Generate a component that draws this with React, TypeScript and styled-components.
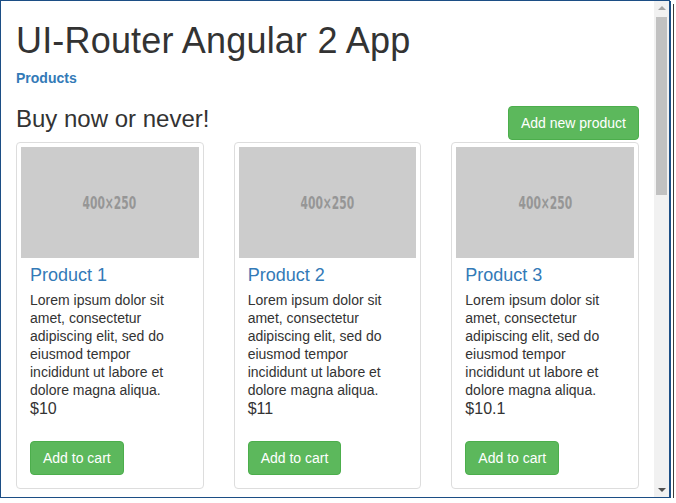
import React from "react";
import styled, { createGlobalStyle } from "styled-components";

const Global = createGlobalStyle`
  html, body { margin: 0; padding: 0; background: #ffffff; }
  body {
    font-family: "Liberation Sans", Arial, Helvetica, sans-serif;
    font-size: 14px;
    line-height: 20px;
    color: #333333;
  }
  * { box-sizing: border-box; }
`;

const Frame = styled.div`
  width: 670px;
  height: 498px;
  border: 1px solid #1c4e85;
  box-shadow: 1px 1px 0 0 #1c4e85, 3px 3px 0 0 #ffffff, 4px 4px 0 0 #3c3c3c;
  display: flex;
  overflow: hidden;
  background: #ffffff;
`;

const Viewport = styled.div`
  flex: 1;
  overflow: hidden;
`;

const Container = styled.div`
  padding: 0 15px;
`;

const Title = styled.h1`
  margin: 20px 0 0;
  font-size: 36px;
  line-height: 39.6px;
  font-weight: 400;
  letter-spacing: 0.18px;
  color: #333333;
`;

const NavLink = styled.a`
  display: block;
  margin-top: 7px;
  font-size: 14px;
  line-height: 20px;
  font-weight: 700;
  color: #337ab7;
  text-decoration: none;
`;

const HeaderRow = styled.div`
  display: flex;
  justify-content: space-between;
  align-items: flex-start;
  margin-top: 18px;
`;

const Subtitle = styled.h3`
  margin: 0 0 10px;
  font-size: 24px;
  line-height: 26.4px;
  font-weight: 400;
  color: #333333;
`;

const Button = styled.button`
  display: inline-block;
  padding: 6px 12px;
  font-family: "Liberation Sans", Arial, sans-serif;
  font-size: 14px;
  line-height: 20px;
  color: #ffffff;
  background: #5cb85c;
  border: 1px solid #4cae4c;
  border-radius: 4px;
  cursor: pointer;
`;

const HeaderButton = styled(Button)`
  margin-top: 0.5px;
`;

const Grid = styled.div`
  display: grid;
  grid-template-columns: repeat(3, 1fr);
  column-gap: 30px;
`;

const Thumbnail = styled.div`
  border: 1px solid #dddddd;
  border-radius: 4px;
  padding: 4px;
  background: #ffffff;
`;

const Placeholder = styled.div`
  aspect-ratio: 400 / 250;
  background: #cccccc;
  display: flex;
  align-items: center;
  justify-content: center;
`;

const PlaceholderText = styled.span`
  display: inline-block;
  font-family: "DejaVu Sans Condensed", "DejaVu Sans", sans-serif;
  font-size: 17px;
  font-weight: 700;
  color: #969696;
  transform: scaleX(0.7);
`;

const Caption = styled.div`
  padding: 8px 9px 9px;
`;

const ProductName = styled.a`
  display: block;
  margin: 0 0 5px;
  font-size: 18px;
  line-height: 19.8px;
  color: #337ab7;
  text-decoration: none;
`;

const Description = styled.p`
  margin: 0;
  font-size: 14px;
  line-height: 18px;
  color: #333333;
`;

const Price = styled.div`
  font-size: 16px;
  line-height: 20px;
  color: #333333;
  margin-bottom: 22px;
`;

const Scrollbar = styled.div`
  width: 15px;
  background: #f1f1f1;
  display: flex;
  flex-direction: column;
  align-items: center;
`;

const Arrow = styled.div<{ $dir: "up" | "down"; $color: string }>`
  width: 0;
  height: 0;
  border-left: 4px solid transparent;
  border-right: 4px solid transparent;
  ${(p) =>
    p.$dir === "up"
      ? `border-bottom: 4px solid ${p.$color}; margin-top: 5px;`
      : `border-top: 4px solid ${p.$color}; margin-bottom: 5px;`}
`;

const Thumb = styled.div`
  width: 11px;
  height: 178px;
  margin-top: 7px;
  background: #c1c1c1;
`;

const Spacer = styled.div`
  flex: 1;
`;

const products = [
  { name: "Product 1", price: "$10" },
  { name: "Product 2", price: "$11" },
  { name: "Product 3", price: "$10.1" },
];

const lorem =
  "Lorem ipsum dolor sit amet, consectetur adipiscing elit, sed do eiusmod tempor incididunt ut labore et dolore magna aliqua.";

export default function App() {
  return (
    <>
      <Global />
      <Frame>
        <Viewport>
          <Container>
            <Title>UI-Router Angular 2 App</Title>
            <NavLink href="#">Products</NavLink>
            <HeaderRow>
              <Subtitle>Buy now or never!</Subtitle>
              <HeaderButton>Add new product</HeaderButton>
            </HeaderRow>
            <Grid>
              {products.map((p) => (
                <Thumbnail key={p.name}>
                  <Placeholder>
                    <PlaceholderText>400×250</PlaceholderText>
                  </Placeholder>
                  <Caption>
                    <ProductName href="#">{p.name}</ProductName>
                    <Description>{lorem}</Description>
                    <Price>{p.price}</Price>
                    <Button>Add to cart</Button>
                  </Caption>
                </Thumbnail>
              ))}
            </Grid>
          </Container>
        </Viewport>
        <Scrollbar>
          <Arrow $dir="up" $color="#a3a3a3" />
          <Thumb />
          <Spacer />
          <Arrow $dir="down" $color="#505050" />
        </Scrollbar>
      </Frame>
    </>
  );
}
